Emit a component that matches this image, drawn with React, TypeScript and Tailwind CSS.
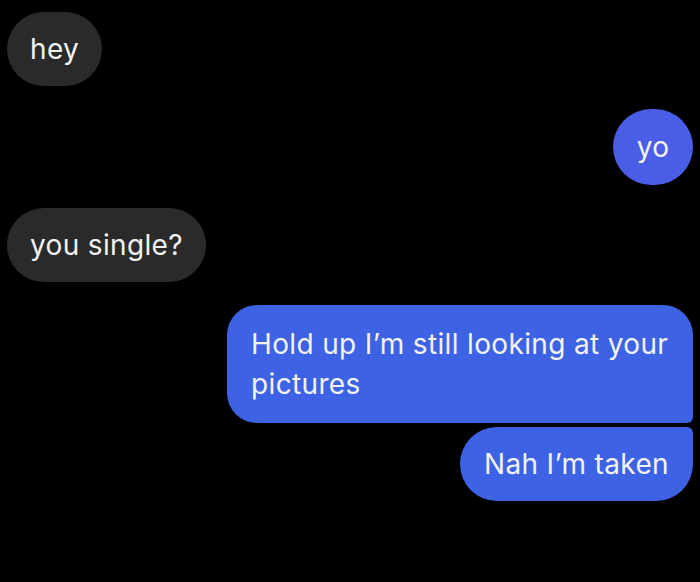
import React from "react";

type Msg = { text: string; mine: boolean; cls: string };

const messages: Msg[] = [
  { text: "hey", mine: false, cls: "mt-[12px] rounded-full px-[23px] h-[74px]" },
  { text: "yo", mine: true, cls: "mt-[23px] rounded-full w-[80px] h-[76px] justify-center" },
  { text: "you single?", mine: false, cls: "mt-[23px] rounded-full px-[23px] h-[74px]" },
  {
    text: "Hold up I\u2019m still looking at your pictures",
    mine: true,
    cls: "mt-[23px] w-[466px] rounded-[30px] rounded-br-[6px] pl-[24px] pr-[12px] py-[19px] leading-[40px]",
  },
  { text: "Nah I\u2019m taken", mine: true, cls: "mt-[4px] rounded-[37px] rounded-tr-[6px] px-[24px] h-[74px]" },
];

const App: React.FC = () => {
  return (
    <div
      className="w-[700px] h-[582px] bg-black overflow-hidden flex flex-col px-[7px] text-[28px] tracking-[0.35px] text-[#f2f2f2]"
      style={{ fontFamily: "Inter, 'Liberation Sans', sans-serif" }}
    >
      {messages.map((m, i) => (
        <div key={i} className={`flex ${m.mine ? "justify-end" : "justify-start"}`}>
          <div
            className={`flex items-center ${
              m.text === "yo" ? "bg-[#4a5de6]" : m.mine ? "bg-[#3d63e4]" : "bg-[#2a2a2a]"
            } ${m.cls}`}
          >
            {m.text}
          </div>
        </div>
      ))}
    </div>
  );
};

export default App;
